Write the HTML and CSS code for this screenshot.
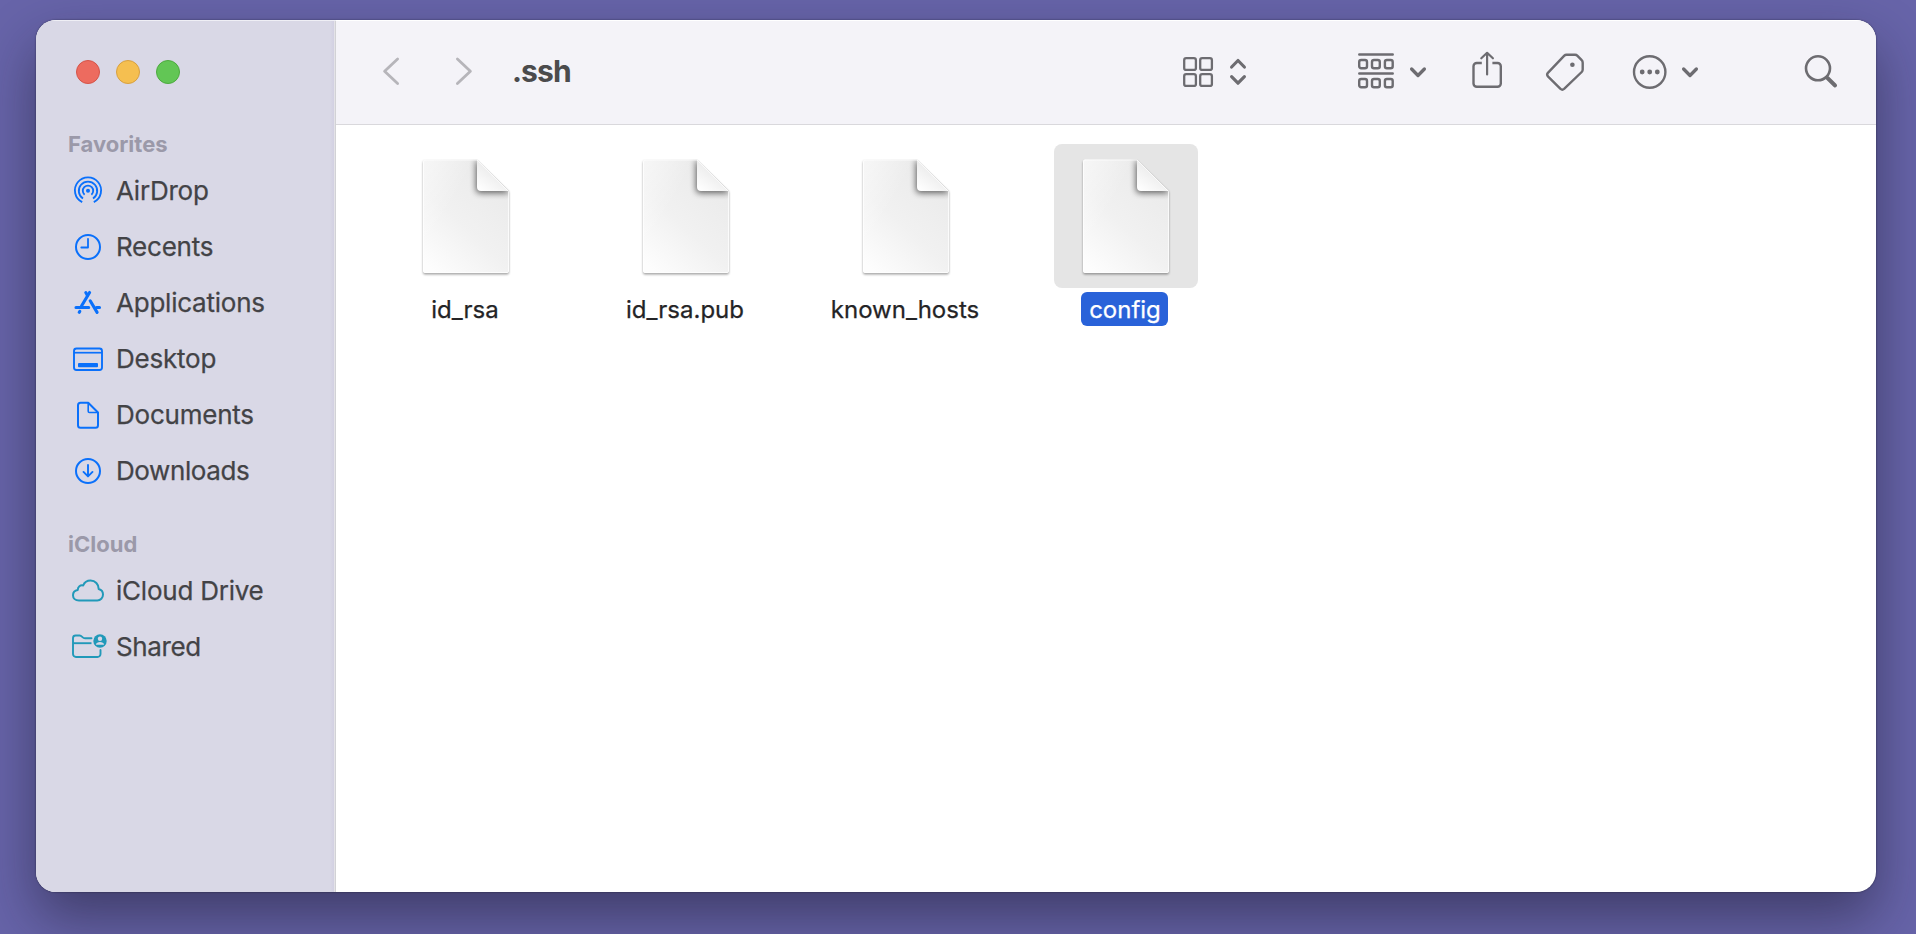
FILE: index.html
```html
<!DOCTYPE html>
<html lang="en">
<head>
<meta charset="utf-8">
<title>.ssh</title>
<link rel="stylesheet" href="styles.css">
</head>
<body>
<svg class="defs" width="0" height="0" aria-hidden="true">
  <defs>
    <linearGradient id="paper" x1="0.75" y1="0.15" x2="0.15" y2="1">
      <stop offset="0" stop-color="#ebebeb"/><stop offset="0.5" stop-color="#f1f1f1"/><stop offset="1" stop-color="#fdfdfd"/>
    </linearGradient>
    <linearGradient id="sheen" x1="0" y1="0" x2="0.4" y2="0.3">
      <stop offset="0" stop-color="#fff" stop-opacity=".5"/><stop offset="1" stop-color="#fff" stop-opacity="0"/>
    </linearGradient>
    <linearGradient id="curl" x1="0.1" y1="1" x2="0.55" y2="0.4">
      <stop offset="0" stop-color="#fff"/><stop offset="1" stop-color="#ececec"/>
    </linearGradient>
    <filter id="drop" x="-20%" y="-20%" width="140%" height="140%"><feGaussianBlur stdDeviation="1"/></filter>
    <filter id="fold" x="-50%" y="-50%" width="200%" height="200%"><feGaussianBlur stdDeviation="3"/></filter>
    <clipPath id="sheet"><path d="M31 15.500H83L115 47V127a2 2 0 0 1-2 2H31a2 2 0 0 1-2-2V17.500a2 2 0 0 1 2-2Z"/></clipPath>
    <symbol id="file" viewBox="0 0 144 144">
      <path d="M31 17H83L115 48V128.500a2 2 0 0 1-2 2H31a2 2 0 0 1-2-2V19a2 2 0 0 1 2-2Z" fill="#000" opacity=".36" filter="url(#drop)"/>
      <path d="M31 15.500H83L115 47V127a2 2 0 0 1-2 2H31a2 2 0 0 1-2-2V17.500a2 2 0 0 1 2-2Z" fill="url(#paper)"/>
      <g clip-path="url(#sheet)">
        <path d="M29 15H115V129H29Z" fill="url(#sheen)"/>
        <path d="M82 15V45q0 4 4 4H117Z" fill="#000" opacity=".6" filter="url(#fold)"/>
      </g>
      <path d="M83 15.500L115 47H87q-4 0-4-4Z" fill="url(#curl)"/>
      <path d="M83 16L114.500 47.500V127a1.500 1.500 0 0 1-1.500 1.500H31a1.500 1.500 0 0 1-1.500-1.500V17.500a1.500 1.500 0 0 1 1.500-1.500Z" fill="none" stroke="#fff" stroke-opacity=".75"/>
    </symbol>
  </defs>
</svg>

<main class="window">
  <aside class="sidebar">
    <div class="lights"><i class="light close"></i><i class="light minimize"></i><i class="light expand"></i></div>

    <h2 class="heading favorites">Favorites</h2>
    <nav class="places">
      <a class="place"><svg class="glyph" viewBox="0 0 36 36"><g fill="none" stroke="currentColor" stroke-width="1.850"><path d="M12.200 29.200A13.100 13.100 0 1 1 23.800 29.200"/><path d="M13 25.500A9.200 9.200 0 1 1 23 25.500"/><path d="M14.600 21.700A5.200 5.200 0 1 1 21.400 21.700"/></g><circle cx="18" cy="17.700" r="2" fill="currentColor"/></svg><span>AirDrop</span></a>
      <a class="place"><svg class="glyph" viewBox="0 0 36 36"><g fill="none" stroke="currentColor" stroke-width="2" stroke-linecap="round" stroke-linejoin="round"><circle cx="18" cy="18" r="12"/><path d="M18 9.800V18.500H11.300" stroke-width="1.800"/></g></svg><span>Recents</span></a>
      <a class="place"><svg class="glyph" viewBox="0 0 36 36"><g fill="none" stroke="currentColor" stroke-width="3.100" stroke-linecap="round"><path d="M19.600 7.500L11.500 21"/><path d="M15.800 7.500L17.500 10.500"/><path d="M6 22.500H18.700M26.500 22.500H29.500"/><path d="M20.200 15.800L27.100 27.400"/><path d="M9.800 26.400L9.200 27.300"/></g></svg><span>Applications</span></a>
      <a class="place"><svg class="glyph" viewBox="0 0 36 36"><g fill="none" stroke="currentColor" stroke-width="1.900"><rect x="4" y="7.500" width="28" height="21.500" rx="2.500"/><path d="M4 11.700H32" stroke-width="1.700"/></g><rect x="8" y="22" width="20" height="4.200" rx="1" fill="currentColor"/></svg><span>Desktop</span></a>
      <a class="place"><svg class="glyph" viewBox="0 0 36 36"><g fill="none" stroke="currentColor" stroke-width="2" stroke-linejoin="round"><path d="M10.500 5.700H18.200L28 15.500V28.200a2.500 2.500 0 0 1-2.500 2.500H10.500A2.500 2.500 0 0 1 8 28.200V8.200A2.500 2.500 0 0 1 10.500 5.700Z"/><path d="M18.200 6V14.200q0 1.300 1.300 1.300H28" stroke-width="1.600"/></g></svg><span>Documents</span></a>
      <a class="place"><svg class="glyph" viewBox="0 0 36 36"><g fill="none" stroke="currentColor" stroke-width="2" stroke-linecap="round" stroke-linejoin="round"><circle cx="18" cy="18" r="12"/><path d="M18 12V23M13.500 18.900L18 23.400L22.500 18.900" stroke-width="1.900"/></g></svg><span class="tight">Downloads</span></a>
    </nav>

    <h2 class="heading icloud">iCloud</h2>
    <nav class="places teal">
      <a class="place"><svg class="glyph" viewBox="0 0 36 36"><path d="M9 27.500C5.300 27.500 3 25.200 3 22.200C3 19.400 5 17.300 7.800 16.900C7.700 13.700 10.300 11.800 13.200 12.500C14.500 9.100 17.400 7.600 20.600 7.600C25.200 7.600 28.700 11.100 28.700 16C31.400 16.700 33 18.900 33 21.600C33 24.900 30.500 27.500 27.300 27.500Z" fill="none" stroke="currentColor" stroke-width="2" stroke-linejoin="round"/></svg><span>iCloud Drive</span></a>
      <a class="place"><svg class="glyph" viewBox="0 0 36 36"><g fill="none" stroke="currentColor" stroke-width="1.900" stroke-linecap="round" stroke-linejoin="round"><path d="M30.500 21V25a3 3 0 0 1-3 3H6a3 3 0 0 1-3-3V9A2.600 2.600 0 0 1 5.600 6.500H9.700C12 6.500 12.400 9.300 15 9.300H21.500"/><path d="M3 14.200H21.500" stroke-linecap="butt"/></g><circle cx="30" cy="12" r="6.700" fill="currentColor"/><circle cx="30" cy="9.700" r="2.200" fill="#d9d8e6"/><path d="M25.900 15.700C26.200 12 33.800 12 34.100 15.700Z" fill="#d9d8e6"/></svg><span class="tight">Shared</span></a>
    </nav>
  </aside>

  <section class="content">
    <header class="toolbar">
      <svg class="nav-arrow" width="18" height="30" viewBox="0 0 18 30"><path d="M15.600 2L2.600 14.200L15.600 26.600"/></svg>
      <svg class="nav-arrow forward" width="18" height="30" viewBox="0 0 18 30"><path d="M2.400 2L15.400 14.200L2.400 26.600"/></svg>
      <h1 class="title">.ssh</h1>
      <div class="tools">
        <svg class="tool" width="32" height="40" viewBox="0 0 32 40"><g stroke-width="2.300"><rect x="2.200" y="6.200" width="11.700" height="11.700" rx="2"/><rect x="18.200" y="6.200" width="11.700" height="11.700" rx="2"/><rect x="2.200" y="22.200" width="11.700" height="11.700" rx="2"/><rect x="18.200" y="22.200" width="11.700" height="11.700" rx="2"/></g></svg>
        <svg class="tool sort" width="18" height="40" viewBox="0 0 18 40"><path d="M2.600 15L9 8.500L15.400 15M2.600 24.700L9 31.200L15.400 24.700" stroke-width="3.200"/></svg>
        <svg class="tool group" width="38" height="40" viewBox="0 0 38 40"><path d="M2.300 2.500H35.700M2.300 21.400H35.700" stroke-width="2.500"/><g stroke-width="2.400"><rect x="2.200" y="8" width="7.800" height="8.200" rx="2"/><rect x="15" y="8" width="7.800" height="8.200" rx="2"/><rect x="27.900" y="8" width="7.800" height="8.200" rx="2"/><rect x="2.200" y="27" width="7.800" height="8.200" rx="2"/><rect x="15" y="27" width="7.800" height="8.200" rx="2"/><rect x="27.900" y="27" width="7.800" height="8.200" rx="2"/></g></svg>
        <svg class="tool chevron" width="18" height="40" viewBox="0 0 18 40"><path d="M2.600 17L9 23.500L15.400 17" stroke-width="3.300"/></svg>
        <svg class="tool share" width="32" height="40" viewBox="0 0 32 40"><path d="M10.800 11H5.800a3.300 3.300 0 0 0-3.300 3.300V31.500a3.300 3.300 0 0 0 3.300 3.300H26.500a3.300 3.300 0 0 0 3.300-3.300V14.300A3.300 3.300 0 0 0 26.500 11H21.400" stroke-width="2.400" stroke-linecap="butt"/><path d="M16.100 22.500V1.500M10.300 6.300L16.100.8L21.900 6.300" stroke-width="2.200"/></svg>
        <svg class="tool tag" width="40" height="40" viewBox="0 0 40 40"><path d="M21.500 2.800H30Q31.500 2.800 32.500 3.800L36.700 8.200Q37.700 9.200 37.700 10.700V17.500Q37.700 19 36.700 20L19.100 36.900Q17.300 38.400 15.500 36.900L2.900 24.400Q1.400 22.600 2.900 20.800L19.300 3.700Q20.200 2.800 21.500 2.800Z" stroke-width="2.400"/><circle cx="27.400" cy="12.700" r="2.300" class="dot"/></svg>
        <svg class="tool more" width="36" height="40" viewBox="0 0 36 40"><circle cx="17.700" cy="20" r="15.700" stroke-width="2.400"/><g class="dot"><circle cx="10.200" cy="20" r="2.400"/><circle cx="17.700" cy="20" r="2.400"/><circle cx="25.300" cy="20" r="2.400"/></g></svg>
        <svg class="tool chevron-more" width="18" height="40" viewBox="0 0 18 40"><path d="M2.600 17L9 23.500L15.400 17" stroke-width="3.300"/></svg>
        <svg class="tool search" width="34" height="40" viewBox="0 0 34 40"><circle cx="14" cy="16.300" r="12" stroke-width="2.600"/><path d="M23.500 26L31.100 33.500" stroke-width="3.900"/></svg>
      </div>
    </header>
    <div class="files">
      <figure class="file"><svg class="thumb"><use href="#file"/></svg><figcaption class="name">id_rsa</figcaption></figure>
      <figure class="file"><svg class="thumb"><use href="#file"/></svg><figcaption class="name">id_rsa.pub</figcaption></figure>
      <figure class="file"><svg class="thumb"><use href="#file"/></svg><figcaption class="name">known_hosts</figcaption></figure>
      <figure class="file selected"><svg class="thumb"><use href="#file"/></svg><figcaption class="name">config</figcaption></figure>
    </div>
  </section>
</main>
</body>
</html>
```
FILE: styles.css
```css
* { box-sizing: border-box; }

body {
  margin: 0;
  height: 934px;
  padding: 20px 40px 42px 36px;
  overflow: hidden;
  background: #6764a9;
  font-family: Inter, "Liberation Sans", sans-serif;
}

.defs { display: block; height: 0; }

.window {
  display: flex;
  height: 872px;
  border-radius: 20px;
  overflow: hidden;
  background: #fff;
  box-shadow: 0 0 2px rgba(0, 0, 0, .5), 0 26px 56px rgba(20, 18, 38, .48);
}

.sidebar {
  flex: 0 0 300px;
  padding: 40px 0 0 32px;
  background: linear-gradient(90deg, transparent 294px, #d2d0e2 298px, #e4e3e8 298px, #e4e3e8 299px, #d2d2d6 299px), #d9d8e6;
  box-shadow: inset 0 1px #efeff5;
}

.lights { display: flex; gap: 16px; padding-left: 8px; }
.light { width: 24px; height: 24px; border-radius: 50%; border: 1px solid; }
.close { background: #ed6b5f; border-color: #d55449; }
.minimize { background: #f5bf50; border-color: #d8a040; }
.expand { background: #62c655; border-color: #4daa3f; }

.heading {
  margin: 0;
  height: 28px;
  line-height: 28px;
  font-size: 22px;
  font-weight: 700;
  color: #9b99a9;
}
.favorites { margin-top: 46px; }
.icloud { margin-top: 31px; }

.places { margin-top: 5px; color: #0a70fb; }
.teal { color: #2199b9; }
.place { display: flex; align-items: center; height: 56px; gap: 10px; padding-left: 2px; }
.place span { font-size: 26px; line-height: 32px; letter-spacing: -.23px; color: #434346; white-space: nowrap; -webkit-text-stroke: .25px #434346; }
.place .tight { letter-spacing: -.4px; }
.glyph { width: 36px; height: 36px; flex: none; overflow: visible; }

.content { flex: 1; min-width: 0; }

.toolbar {
  display: flex;
  align-items: center;
  height: 105px;
  padding-left: 46px;
  background: #f4f3f8;
  border-bottom: 1px solid #d9d8dc;
  box-shadow: inset 0 1px #fff;
}
.nav-arrow { flex: none; fill: none; stroke: #b6b5ba; stroke-width: 2.800; stroke-linecap: round; stroke-linejoin: round; }
.forward { margin-left: 55px; }
.title { margin: 0 0 2px 39px; width: 71px; font-size: 30px; line-height: 40px; font-weight: 700; letter-spacing: -.9px; color: #4b4b4c; }

.tools { display: flex; align-items: center; margin: 0 0 1px 599px; }
.tool { flex: none; fill: none; stroke: #6d6c71; stroke-linecap: round; stroke-linejoin: round; overflow: visible; }
.dot { fill: #6d6c71; stroke: none; }
.sort { margin-left: 15px; }
.group { margin-left: 110px; }
.chevron { margin-left: 14px; }
.share { margin-left: 44px; }
.tag { margin-left: 42px; }
.more { margin-left: 47px; }
.chevron-more { margin-left: 13px; }
.search { margin-left: 105px; }

.files { display: flex; gap: 20px; padding: 19px 0 0 22px; }
.file { width: 200px; margin: 0; display: flex; flex-direction: column; align-items: center; }
.thumb { width: 144px; height: 144px; border-radius: 8px; margin-left: 15px; }
.name { margin: 4px 0 0 13px; height: 34px; line-height: 35px; padding: 0 7px 0 8px; border-radius: 6px; font-size: 24px; color: #242426; white-space: nowrap; -webkit-text-stroke: .25px currentColor; }
.selected .thumb { background: #e5e5e5; }
.selected .name { background: #2962d9; color: #fff; }
```
